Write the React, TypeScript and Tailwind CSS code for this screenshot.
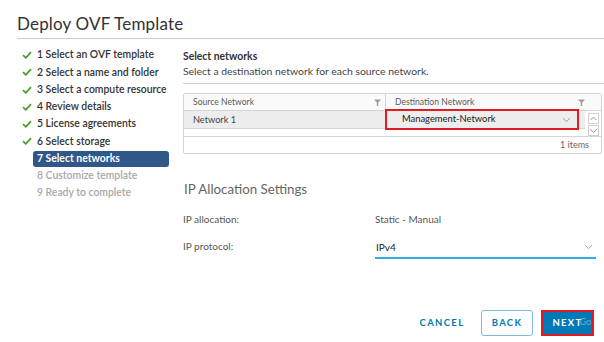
import React from "react";

const Check = () => (
  <svg width="10" height="8" viewBox="0 0 10 8" className="shrink-0">
    <path d="M1 4.2 L3.8 6.8 L9 1.2" fill="none" stroke="#48a02c" strokeWidth="1.8" />
  </svg>
);

const Funnel = () => (
  <svg width="7" height="7" viewBox="0 0 7 7">
    <path d="M0 0.5 H7 L4.2 3.4 V7 H2.8 V3.4 Z" fill="#9a9a9a" />
  </svg>
);

const ChevronDown = ({ color = "#9a9a9a" }: { color?: string }) => (
  <svg width="9" height="6" viewBox="0 0 9 6">
    <path d="M0.8 1 L4.5 4.6 L8.2 1" fill="none" stroke={color} strokeWidth="1" />
  </svg>
);

const ChevronUp = ({ color = "#9a9a9a" }: { color?: string }) => (
  <svg width="7" height="5" viewBox="0 0 7 5">
    <path d="M0.6 4 L3.5 1 L6.4 4" fill="none" stroke={color} strokeWidth="1" />
  </svg>
);

const steps = [
  { n: "1 Select an OVF template", s: "done" },
  { n: "2 Select a name and folder", s: "done" },
  { n: "3 Select a compute resource", s: "done" },
  { n: "4 Review details", s: "done" },
  { n: "5 License agreements", s: "done" },
  { n: "6 Select storage", s: "done" },
  { n: "7 Select networks", s: "active" },
  { n: "8 Customize template", s: "todo" },
  { n: "9 Ready to complete", s: "todo" },
];

export default function App() {
  return (
    <div
      className="w-[604px] h-[342px] bg-white flex flex-col overflow-hidden text-[#333]"
      style={{ fontFamily: "Lato, 'Open Sans', sans-serif" }}
    >
      <div className="ml-[17px] pt-[12px] pb-[2px] border-b border-[#cccccc]">
        <h1 className="text-[17px] leading-[24px] text-[#333] font-normal tracking-[0.01em]">Deploy OVF Template</h1>
      </div>

      <div className="flex flex-1">
        <div className="w-[169px] pl-[17px] pt-[7.5px] shrink-0">
          {steps.map((st) => (
            <div key={st.n} className="h-[17.25px] flex items-center whitespace-nowrap">
              <div className="w-[16px] pl-[5px] flex items-center">
                {st.s === "done" && <Check />}
              </div>
              <div
                className={
                  st.s === "active"
                    ? "flex-1 h-[16px] flex items-center pl-[4px] rounded-[3px] bg-[#2f5788] text-white text-[10.4px] font-bold"
                    : st.s === "done"
                    ? "flex-1 pl-[4px] text-[10.4px] font-semibold text-[#333]"
                    : "flex-1 pl-[4px] text-[10.4px] font-semibold text-[#a8a8a8]"
                }
              >
                {st.n}
              </div>
            </div>
          ))}
        </div>

        <div className="w-[421px] ml-[14px] pt-[10px]">
          <div className="border-b border-[#cccccc] pb-[4px]">
            <div className="text-[10.4px] leading-[15px] font-bold text-[#333]">Select networks</div>
            <div className="text-[10.4px] leading-[15px] text-[#444]">
              Select a destination network for each source network.
            </div>
          </div>

          <div className="mt-[9px] w-[419px] border border-[#d4d4d4] rounded-[2px] text-[#444]">
            <div className="grid grid-cols-[202px_199px_16px] h-[17px] bg-[#fafafa] border-b border-[#d4d4d4] text-[8.6px] text-[#5a5a5a]">
              <div className="flex items-center justify-between pl-[9px] pr-[4px] border-r border-[#d4d4d4]">
                <span>Source Network</span>
                <Funnel />
              </div>
              <div className="flex items-center justify-between pl-[9px] pr-[0px]">
                <span>Destination Network</span>
                <Funnel />
              </div>
              <div />
            </div>
            <div className="grid grid-cols-[401px_16px] h-[25px]">
              <div>
                <div className="grid grid-cols-[202px_199px] h-[18px] bg-[#ededed] border-b border-[#d4d4d4]">
                  <div className="flex items-center pl-[9px] text-[9.2px] text-[#444]">Network 1</div>
                  <div className="relative">
                    <div className="absolute left-[-1px] right-[6px] top-[-2px] bottom-[-2px] border-2 border-[#e21b23] flex items-center justify-between pl-[15px] pr-[6px]">
                      <span className="text-[#222] text-[9.4px]">Management-Network</span>
                      <ChevronDown />
                    </div>
                  </div>
                </div>
              </div>
              <div className="flex flex-col items-center pt-[2px] gap-[1px]">
                <div className="w-[11px] h-[11px] border border-[#cfcfcf] flex items-center justify-center">
                  <ChevronUp />
                </div>
                <div className="w-[11px] h-[11px] border border-[#cfcfcf] flex items-center justify-center">
                  <ChevronDown />
                </div>
              </div>
            </div>
            <div className="h-[17px] border-t border-[#d4d4d4] flex items-center justify-end pr-[12px] text-[9px] text-[#666]">
              1 items
            </div>
          </div>

          <div className="mt-[26px] text-[13.3px] leading-[18px] text-[#666] pl-[1px]">IP Allocation Settings</div>

          <div className="mt-[13px] flex text-[10px] text-[#555]">
            <div className="w-[192px] shrink-0 h-[16px] flex items-center">IP allocation:</div>
            <div className="h-[16px] flex items-center">Static - Manual</div>
          </div>
          <div className="mt-[10px] flex items-start text-[10px] text-[#555]">
            <div className="w-[192px] shrink-0 h-[18px] flex items-center">IP protocol:</div>
            <div className="w-[221px] h-[22px] flex items-center justify-between pl-[1px] pr-[3px] border-b-2 border-[#2eaee6]">
              <span className="text-[#222]">IPv4</span>
              <ChevronDown color="#aaaaaa" />
            </div>
          </div>
        </div>
      </div>

      <div className="flex justify-end items-center gap-[8px] pr-[10px] pb-[6px]">
        <button className="w-[62px] h-[26px] text-[9.5px] font-bold tracking-[0.14em] text-[#0079b8]">CANCEL</button>
        <button className="w-[52px] h-[26px] rounded-[3px] border border-[#7cbadb] text-[9.5px] font-bold tracking-[0.14em] text-[#0079b8]">
          BACK
        </button>
        <button className="relative w-[53px] h-[26px] border-2 border-[#e21b23] bg-[#0079b8] text-[9.5px] font-bold tracking-[0.14em] text-white">
          NEXT
          <span className="absolute right-[1px] top-[3px] text-[9px] tracking-normal font-normal text-white/40">Go</span>
        </button>
      </div>
    </div>
  );
}
